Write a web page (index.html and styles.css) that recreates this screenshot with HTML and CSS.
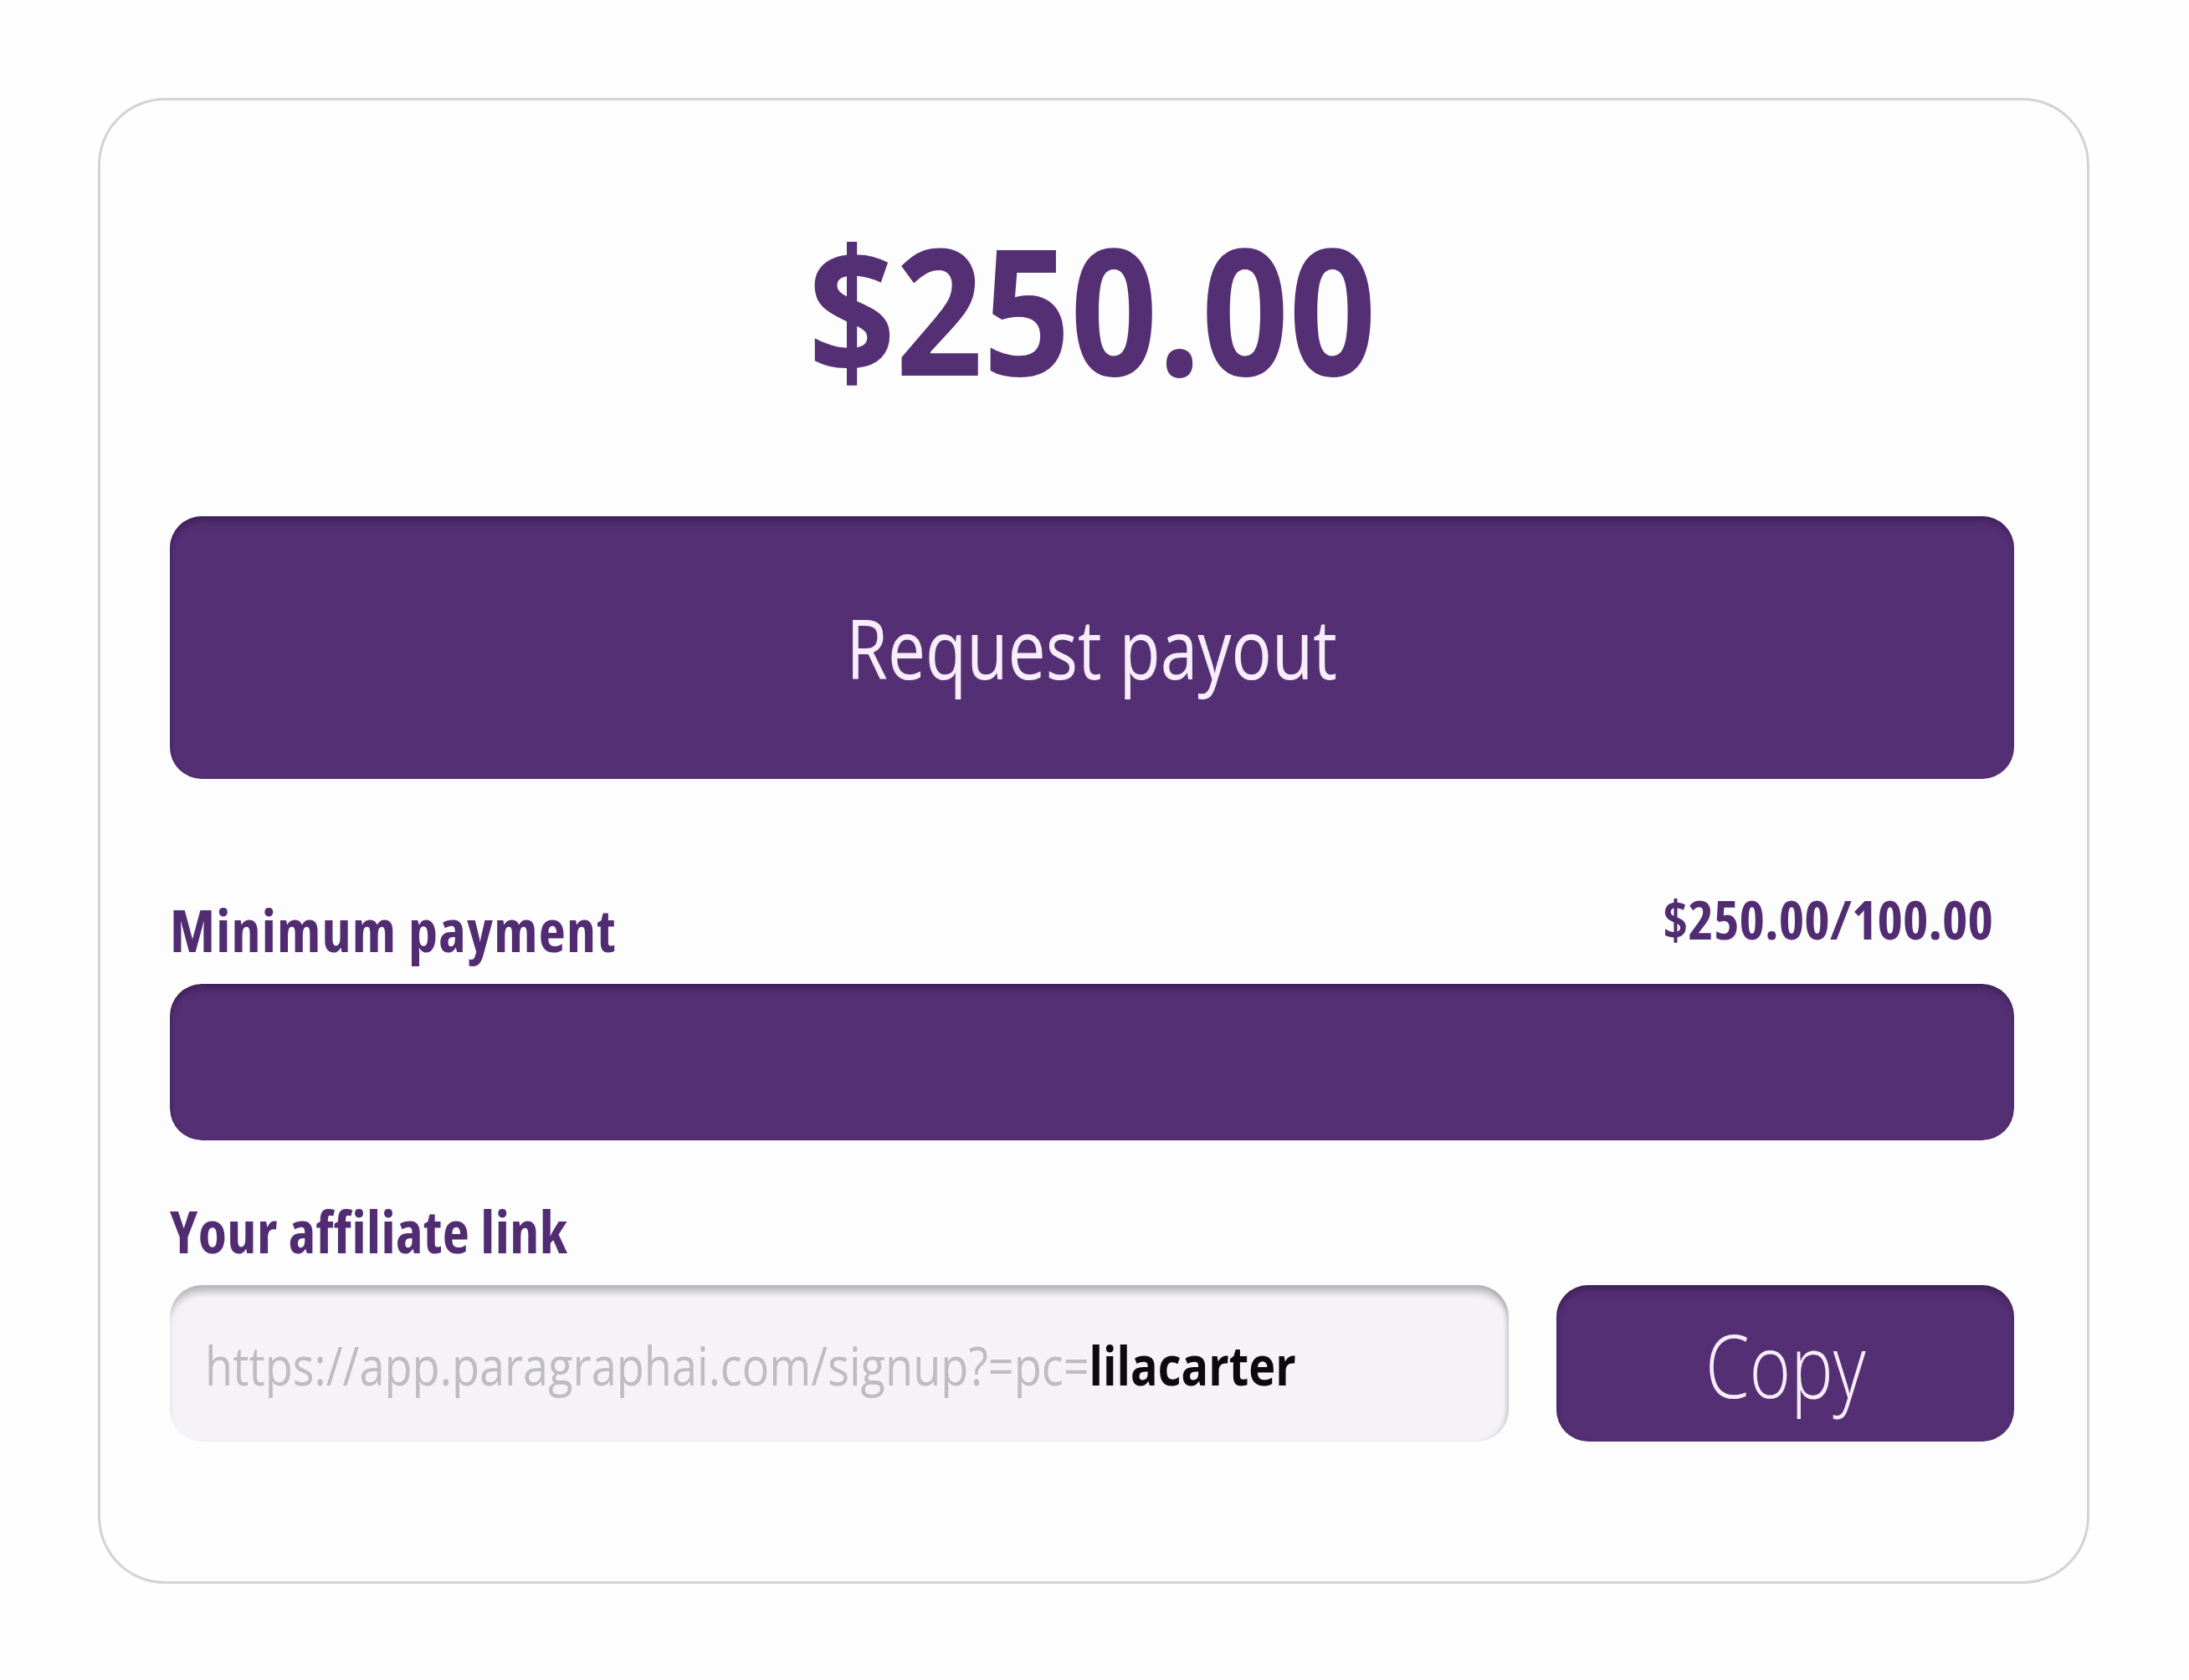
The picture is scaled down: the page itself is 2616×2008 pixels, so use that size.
FILE: index.html
```html
<!DOCTYPE html>
<html lang="en">
<head>
<meta charset="utf-8">
<title>Affiliate payout</title>
<link rel="stylesheet" href="styles.css">
</head>
<body>
<main class="page">
  <section class="card">
    <div class="amount"><span class="amount-text">$250.00</span></div>
    <button class="btn btn-request" type="button"><span class="btn-text">Request payout</span></button>
    <div class="label-row">
      <span class="label">Minimum payment</span>
      <span class="progress-value">$250.00/100.00</span>
    </div>
    <div class="progress"><div class="progress-fill" style="width:100%"></div></div>
    <div class="label label-link">Your affiliate link</div>
    <div class="link-row">
      <div class="link-input"><span class="link-text"><span class="link-base">https://app.paragraphai.com/signup?=pc=</span><span class="link-code">lilacarter</span></span></div>
      <button class="btn btn-copy" type="button"><span class="btn-text copy-text">Copy</span></button>
    </div>
  </section>
</main>
</body>
</html>
```

FILE: styles.css
```css
* { box-sizing: border-box; }
html, body { margin: 0; padding: 0; background: #fefefe; }
body { font-family: "Open Sans", "Noto Sans", sans-serif; }

.page { padding: 117px 119px 115px 117px; }

.card {
  width: 2380px;
  height: 1776px;
  border: 3px solid #d3d3d6;
  border-radius: 80px;
  background: #fdfdfd;
  padding: 143px 87px 0 83px;
  display: flex;
  flex-direction: column;
}

.amount {
  font-size: 210px;
  line-height: 210px;
  height: 210px;
  font-weight: 700;
  color: #552f74;
  text-align: center;
}
.amount-text {
  display: inline-block;
  transform: scaleX(0.87);
  transform-origin: center;
}

.btn {
  border: none;
  background: #552f74;
  color: #f8eefa;
  font-family: inherit;
  cursor: pointer;
  padding: 0;
  display: flex;
  align-items: center;
  justify-content: center;
  box-shadow: inset 0 9px 9px -3px rgba(40, 20, 60, 0.45), inset 3px 0 5px -2px rgba(40, 20, 60, 0.25);
}

.btn-text {
  display: inline-block;
  transform: scaleX(0.82);
  transform-origin: center;
  white-space: nowrap;
}

.btn-request {
  margin-top: 144px;
  height: 314px;
  border-radius: 38px;
  font-size: 98px;
  font-weight: 400;
}

.label-row {
  margin-top: 135px;
  display: flex;
  justify-content: space-between;
  align-items: flex-end;
  padding-right: 25px;
}

.label {
  font-size: 70px;
  line-height: 70px;
  font-weight: 700;
  font-stretch: 75%;
  letter-spacing: 0.5px;
  color: #512c72;
}
.label-row .label { letter-spacing: 1.2px; }

.progress-value {
  font-size: 65px;
  line-height: 65px;
  font-weight: 700;
  font-stretch: 75%;
  color: #512c72;
  margin-bottom: 15px;
}

.progress {
  margin-top: 30px;
  height: 187px;
  border-radius: 38px;
  background: #f1eef4;
  overflow: hidden;
}
.progress-fill {
  height: 100%;
  background: #552f74;
  border-radius: 38px;
  box-shadow: inset 0 9px 9px -3px rgba(40, 20, 60, 0.45), inset 3px 0 5px -2px rgba(40, 20, 60, 0.25);
}

.label-link { margin-top: 73px; }

.link-row {
  margin-top: 30px;
  display: flex;
  gap: 57px;
  height: 187px;
}

.link-input {
  width: 1600px;
  height: 187px;
  border-radius: 38px;
  background: #f5f3f7;
  box-shadow: inset 0 12px 10px -4px rgba(0, 0, 0, 0.25), inset -5px 0 6px -3px rgba(0, 0, 0, 0.18);
  display: flex;
  align-items: center;
  padding-left: 42px;
  padding-top: 4px;
  font-size: 64px;
  white-space: nowrap;
  overflow: hidden;
}
.link-text {
  display: inline-block;
  transform: scaleX(0.845);
  transform-origin: left center;
}
.link-base { color: #bdbcc0; font-weight: 400; }
.link-code { color: #0c0a0e; font-weight: 700; }

.btn-copy {
  flex: 1;
  height: 187px;
  border-radius: 38px;
  font-size: 106px;
  font-weight: 300;
}
.copy-text { transform: scaleX(0.8); }
```
